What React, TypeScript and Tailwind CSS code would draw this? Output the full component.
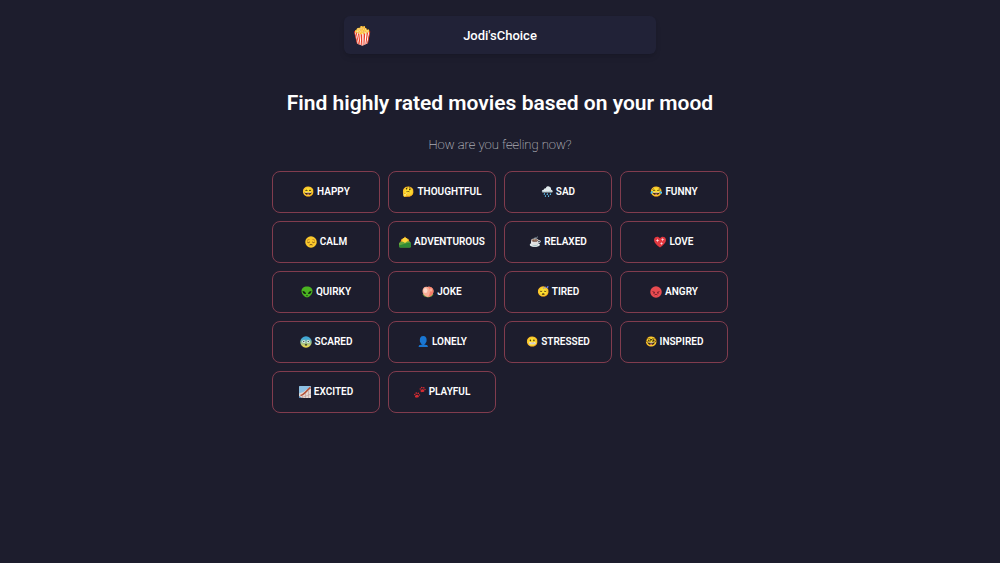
import type { ReactNode } from "react";

function Icon({ children }: { children: ReactNode }) {
  return (
    <svg viewBox="0 0 24 24" className="size-3 shrink-0" aria-hidden="true">
      {children}
    </svg>
  );
}

const Calm = () => (
  <Icon>
    <circle cx="12" cy="12" r="11.5" fill="#fbc92c" />
    <path d="M4 9q2-2 5-2M15 7q3 0 5 2" fill="none" stroke="#b5761c" strokeWidth="1.5" />
    <path d="M4.5 12q2.5 2.5 5 0M14.5 12q2.5 2.5 5 0M9 18q3-2 6 0" fill="none" stroke="#6b4518" strokeWidth="1.8" />
  </Icon>
);

const Sunrise = () => (
  <Icon>
    <path d="M3 12L5 6l4-1 3-4 3 4 4 1 2 6z" fill="#f5a31f" />
    <circle cx="12" cy="9" r="5.5" fill="#ffd83d" />
    <path d="M0 14q4-5 9-2l3 2 4-3q5-2 8 3v6q0 3-3 3H3q-3 0-3-3z" fill="#67a63a" />
    <path d="M0 19q7-2 13-4 6-2 11-1v6q0 3-3 3H3q-3 0-3-3z" fill="#2f8a35" />
  </Icon>
);

const Alien = () => (
  <Icon>
    <path d="M12 1C5 1 1 5 1 10c0 7 7 13 11 13s11-6 11-13c0-5-4-9-11-9z" fill="#4bb321" />
    <path d="M3 10q6 0 7 6-6 1-7-6zM21 10q-6 0-7 6 6 1 7-6z" fill="#10240e" />
    <path d="M10 19q2 1 4 0" stroke="#174a10" strokeWidth="1.5" fill="none" />
  </Icon>
);

const Peach = () => (
  <Icon>
    <path d="M1 16q2 6 11 7 9-1 11-7z" fill="#719b3c" />
    <path d="M11 2C5 0 1 5 1 10c0 6 5 11 11 12 6-1 11-6 11-12 0-6-6-10-12-8z" fill="#f9ad97" />
    <path d="M11 2c7 4 6 13 1 20 6-1 11-6 11-12 0-6-6-10-12-8z" fill="#f67e68" />
    <ellipse cx="7" cy="9" rx="4" ry="5" fill="#ffd8c8" />
    <ellipse cx="18" cy="8" rx="2.5" ry="3.5" fill="#ffae98" />
  </Icon>
);

const Angry = () => (
  <Icon>
    <circle cx="12" cy="12" r="11.5" fill="#e84b50" />
    <path d="M5 11l5 2M19 11l-5 2M9 18q3-3 6 0" fill="none" stroke="#7b202d" strokeWidth="1.8" />
    <circle cx="8" cy="14" r="1.5" fill="#611b29" />
    <circle cx="16" cy="14" r="1.5" fill="#611b29" />
  </Icon>
);

const Scared = () => (
  <Icon>
    <defs>
      <linearGradient id="scared-face" x2="0" y2="1">
        <stop offset=".2" stopColor="#42a7d5" />
        <stop offset=".9" stopColor="#e8d751" />
      </linearGradient>
    </defs>
    <circle cx="12" cy="12" r="11.5" fill="url(#scared-face)" />
    <circle cx="7.5" cy="11" r="3" fill="#e7f6ee" />
    <circle cx="16.5" cy="11" r="3" fill="#e7f6ee" />
    <circle cx="7.5" cy="11" r="1.4" fill="#333b42" />
    <circle cx="16.5" cy="11" r="1.4" fill="#333b42" />
    <ellipse cx="12" cy="17.5" rx="2.5" ry="2" fill="#4e5436" />
  </Icon>
);

const Heart = () => (
  <Icon>
    <path d="M12 23C5 18 0 13 0 8c0-7 9-9 12-3 3-6 12-4 12 3 0 5-5 10-12 15z" fill="#e23840" />
    <path d="M7 5l1 3 3 1-3 1-1 3-1-3-3-1 3-1zM17 4l1 2 3 1-3 1-1 3-1-3-2-1 2-1zM15 12l1 2 2 1-2 1-1 2-1-2-2-1 2-1z" fill="#ffd0d5" />
  </Icon>
);

const Coaster = () => (
  <Icon>
    <rect width="24" height="24" rx="1" fill="#8dbfe2" />
    <path d="M0 15q8-1 14-7l10-6v22H0z" fill="#e3d8d2" />
    <path d="M3 19C10 18 14 10 23 3" fill="none" stroke="#b45138" strokeWidth="3.5" />
    <path d="M7 18v6M13 14v10M19 9v15M4 24l20-8" stroke="#b48d8b" strokeWidth="1" />
    <path d="M0 20l6 4H0z" fill="#4a84b8" />
  </Icon>
);

const Paws = () => (
  <Icon>
    <g fill="#d32b32">
      <path d="M2 22c-1-3 3-6 6-4 3 2 2 5-1 5-2 0-3 1-5-1zM13 11c-1-3 3-6 6-4 3 2 2 5-1 5-2 0-3 1-5-1z" />
      <circle cx="1.5" cy="17" r="1.5" />
      <circle cx="4.5" cy="14" r="1.7" />
      <circle cx="8.5" cy="14.5" r="1.7" />
      <circle cx="11" cy="18" r="1.5" />
      <circle cx="12.5" cy="6" r="1.5" />
      <circle cx="15.5" cy="3" r="1.7" />
      <circle cx="19.5" cy="3.5" r="1.7" />
      <circle cx="22" cy="7" r="1.5" />
    </g>
  </Icon>
);

const moods: [ReactNode, string][] = [
  ["😄", "Happy"], ["🤔", "Thoughtful"], ["🌧️", "Sad"], ["😂", "Funny"],
  [<Calm />, "Calm"], [<Sunrise />, "Adventurous"], ["☕", "Relaxed"], [<Heart />, "Love"],
  [<Alien />, "Quirky"], [<Peach />, "Joke"], ["😴", "Tired"], [<Angry />, "Angry"],
  [<Scared />, "Scared"], ["👤", "Lonely"], ["😬", "Stressed"], ["🤓", "Inspired"],
  [<Coaster />, "Excited"], [<Paws />, "Playful"],
];

export default function App() {
  return (
    <div className="min-h-screen bg-[#1d1d2d] px-4 pt-4 font-[Roboto,sans-serif] text-white">
      <header className="mx-auto flex max-w-[312px] items-center rounded-md bg-[#212237] px-[6px] pt-[6px] pb-1 shadow-md">
        <span className="w-6 text-center text-lg leading-7" aria-hidden="true">🍿</span>
        <span className="flex-1 pr-6 text-center text-[13px] leading-7 font-medium">Jodi'sChoice</span>
      </header>
      <main className="mx-auto max-w-[456px] pt-9 text-center">
        <h1 className="text-[21px] leading-[26px] font-semibold">Find highly rated movies based on your mood</h1>
        <p className="mt-[19px] text-[13px] leading-5 font-thin text-gray-200">How are you feeling now?</p>
        <div className="mt-4 grid grid-cols-2 gap-2 min-[480px]:grid-cols-4">
          {moods.map(([icon, name]) => (
            <button key={name} type="button" className="flex h-[42px] items-center justify-center gap-[3px] rounded-lg border border-[#813c4e] text-[10px] leading-4 font-semibold uppercase">
              <span aria-hidden="true">{icon}</span>
              <span>{name}</span>
            </button>
          ))}
        </div>
      </main>
    </div>
  );
}
